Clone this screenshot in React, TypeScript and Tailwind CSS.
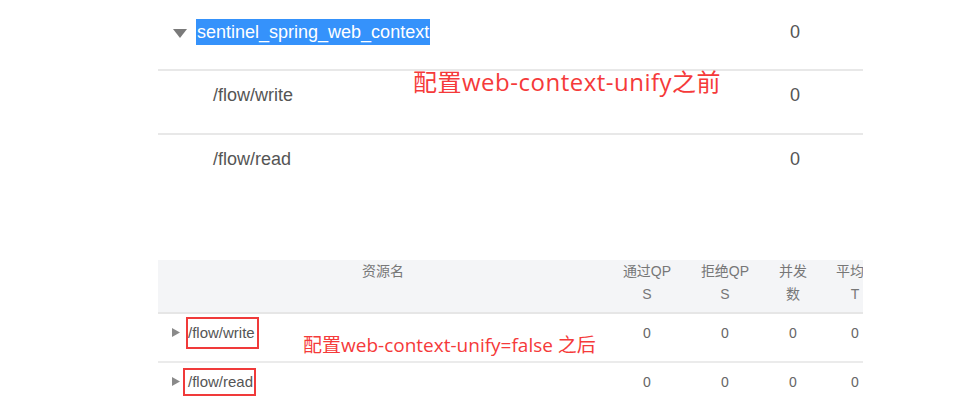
const TOP_ROWS = [
  { name: "/flow/write", value: "0" },
  { name: "/flow/read", value: "0" },
];

const COLS = [
  { w: "w-[78px]", l1: "通过QP", l2: "S" },
  { w: "w-[78px]", l1: "拒绝QP", l2: "S" },
  { w: "w-[58px]", l1: "并发", l2: "数" },
  { w: "w-[66px]", l1: "平均R", l2: "T" },
];

const BOTTOM_ROWS = [
  { name: "/flow/write", box: "left-[-2px] right-[-4px] top-[-6px] bottom-[-6px]" },
  { name: "/flow/read", box: "left-[-5px] right-[-3px] top-[-4px] bottom-[-4px]" },
];

function DownTriangle() {
  return (
    <svg width="14" height="9" viewBox="0 0 14 9">
      <path d="M0 0 H14 L7 9 Z" fill="#7a7a7a" />
    </svg>
  );
}

function RightTriangle() {
  return (
    <svg width="8" height="9" viewBox="0 0 8 9">
      <path d="M0 0 L8 4.5 L0 9 Z" fill="#8a8a8a" />
    </svg>
  );
}

export default function App() {
  return (
    <div
      className="relative w-[977px] h-[407px] overflow-hidden bg-white"
      style={{ fontFamily: '"Liberation Sans", "Noto Sans CJK SC", sans-serif' }}
    >
      {/* before */}
      <div className="ml-[158px] w-[705px] h-[260px] text-[18px] text-[#555]">
        <div className="flex h-[71px] border-b-2 border-[#e8e8e8]">
          <div className="flex w-[632px] items-start pt-[19px]">
            <div className="ml-[15px] mt-[10px]">
              <DownTriangle />
            </div>
            <span className="ml-[9px] bg-[#3592fb] px-[1px] leading-[26px] text-white">
              sentinel_spring_web_context
            </span>
          </div>
          <div className="pt-[19px] leading-[26px]">0</div>
        </div>
        {TOP_ROWS.map((r, i) => (
          <div
            key={r.name}
            className={`flex h-[64px] ${i === 0 ? "border-b-2 border-[#e8e8e8]" : ""}`}
          >
            <div className="w-[632px] pl-[55px] pt-[11px] leading-[26px]">{r.name}</div>
            <div className="pt-[11px] leading-[26px]">{r.value}</div>
          </div>
        ))}
      </div>

      {/* after */}
      <div className="ml-[158px] w-[705px] overflow-hidden text-[14px] text-[#666]">
        <div className="flex h-[54px] border-b-2 border-[#e6e6e6] bg-[#f4f5f7] text-[#777] leading-[23px]">
          <div className="w-[450px] shrink-0 text-center">资源名</div>
          {COLS.map((c) => (
            <div key={c.l1} className={`${c.w} shrink-0 text-center whitespace-nowrap`}>
              {c.l1}
              <br />
              {c.l2}
            </div>
          ))}
        </div>
        {BOTTOM_ROWS.map((r, i) => (
          <div
            key={r.name}
            className={`flex h-[49px] ${i === 0 ? "border-b-2 border-[#ebebeb]" : ""}`}
          >
            <div className="flex w-[450px] shrink-0 items-start pt-[9px]">
              <div className="ml-[14px] mt-[5px]">
                <RightTriangle />
              </div>
              <span className="relative ml-[8px] text-[15px] leading-[20px] text-[#555]">
                {r.name}
                <span className={`absolute ${r.box} border-2 border-[#f03a3a]`} />
              </span>
            </div>
            {COLS.map((c) => (
              <div key={c.l1} className={`${c.w} shrink-0 pt-[9px] text-center leading-[20px]`}>
                0
              </div>
            ))}
          </div>
        ))}
      </div>

      {/* annotations */}
      <div
        className="absolute left-[413px] top-[66px] text-[24px] leading-[31px] tracking-[0.5px] text-[#f53a3a] whitespace-nowrap"
        style={{ fontFamily: '"Open Sans", "Noto Sans CJK SC", sans-serif' }}
      >
        配置web-context-unify之前
      </div>
      <div
        className="absolute left-[303px] top-[333px] text-[19px] leading-[25px] text-[#f53a3a] whitespace-nowrap"
        style={{ fontFamily: '"Open Sans", "Noto Sans CJK SC", sans-serif' }}
      >
        配置web-context-unify=false 之后
      </div>
    </div>
  );
}
